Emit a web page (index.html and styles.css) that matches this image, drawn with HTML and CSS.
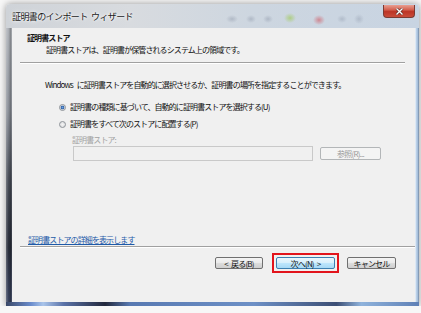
FILE: index.html
```html
<!DOCTYPE html>
<html>
<head>
    <meta charset="utf-8">
    <title>証明書のインポート ウィザード</title>
    <link rel="stylesheet" href="styles.css">
</head>
<body>
    <div class="window">
        <div class="titlebar">
            <span class="title">証明書のインポート ウィザード</span>
            <button class="close">
                <svg width="9" height="7" viewBox="0 0 9 7"><path d="M1.5 0.5 L7.5 6.5 M7.5 0.5 L1.5 6.5" stroke="#5a2a24" stroke-width="2.6"/><path d="M1.5 0.5 L7.5 6.5 M7.5 0.5 L1.5 6.5" stroke="#fff" stroke-width="1.4"/></svg>
            </button>
        </div>
        <div class="frame">
            <div class="edge-left"></div>
            <div class="client">
                <div class="header">
                    <h1>証明書ストア</h1>
                    <p>証明書ストアは、証明書が保管されるシステム上の領域です。</p>
                </div>
                <hr class="sep">
                <div class="body">
                    <p class="intro">Windows に証明書ストアを自動的に選択させるか、証明書の場所を指定することができます。</p>
                    <label class="radio"><span class="dot checked"></span>証明書の種類に基づいて、自動的に証明書ストアを選択する(U)</label>
                    <label class="radio"><span class="dot"></span>証明書をすべて次のストアに配置する(P)</label>
                    <div class="store">
                        <div class="store-label">証明書ストア:</div>
                        <div class="store-row">
                            <div class="field"></div>
                            <button class="btn disabled">参照(R)...</button>
                        </div>
                    </div>
                </div>
                <a class="more" href="#">証明書ストアの詳細を表示します</a>
                <hr class="sep">
                <div class="footer">
                    <button class="btn back">&lt; 戻る(B)</button>
                    <span class="highlight"><button class="btn default">次へ(N) &gt;</button></span>
                    <button class="btn cancel">キャンセル</button>
                </div>
            </div>
            <div class="edge-right"></div>
        </div>
        <div class="edge-bottom"></div>
    </div>
</body>
</html>
```

FILE: styles.css
```css
body {
    margin: 0;
    background: #f7f7f7;
    font-family: "Noto Sans CJK JP", "Noto Sans", sans-serif;
    color: #111;
}
.window {
    margin: 4px 0 0 6px;
    width: 413px;
    height: 302px;
    display: flex;
    flex-direction: column;
    box-shadow: 0 0 7px rgba(0, 0, 0, 0.4);
    border-radius: 4px 4px 0 0;
}
.titlebar {
    height: 24px;
    display: flex;
    align-items: flex-start;
    justify-content: space-between;
    border-radius: 4px 4px 0 0;
    background:
        radial-gradient(ellipse 6px 4px at 226px 15px, rgba(120,130,150,0.35), transparent),
        radial-gradient(ellipse 5px 4px at 245px 15px, rgba(120,130,150,0.35), transparent),
        radial-gradient(ellipse 5px 4px at 262px 15px, rgba(120,130,150,0.35), transparent),
        radial-gradient(ellipse 6px 5px at 284px 14px, rgba(150,200,60,0.55), transparent),
        radial-gradient(ellipse 6px 5px at 313px 16px, rgba(210,60,70,0.5), transparent),
        radial-gradient(ellipse 5px 4px at 336px 15px, rgba(120,130,150,0.3), transparent),
        radial-gradient(ellipse 5px 5px at 353px 15px, rgba(120,130,150,0.3), transparent),
        linear-gradient(to right, #cfd3d8 0, #d8dbdf 30%, #cdd6e0 60%, #c8d4e2 100%);
}
.title {
    padding: 7px 0 0 6px;
    font-size: 9px;
    letter-spacing: -0.6px;
    word-spacing: 2px;
    line-height: 12px;
    color: #1a1a1a;
    text-shadow: 0 0 4px #fff, 0 0 2px #fff;
}
.close {
    margin: 1px 4px 0 0;
    width: 32px;
    height: 13px;
    padding: 0;
    display: flex;
    align-items: center;
    justify-content: center;
    border: 1px solid #7a3a32;
    border-top: none;
    border-radius: 0 0 4px 4px;
    background: linear-gradient(to bottom, #e8a092 0, #d4604f 40%, #bc3526 55%, #c94c3a 100%);
}
.frame {
    flex: 1;
    display: flex;
}
.edge-left {
    width: 6px;
    background:
        linear-gradient(to right, rgba(255,255,255,0.25), rgba(0,0,0,0) 40%, rgba(0,0,0,0.25) 80%, rgba(255,255,255,0.1)),
        linear-gradient(to bottom, #aeb2b8 0, #8a8f98 30%, #4a4f5a 55%, #2a2f3c 80%, #3a4460 100%);
}
.edge-right {
    width: 4px;
    background:
        linear-gradient(to right, #eef4fa, #b6cde6 40%, #9db8d6 80%, #5a6a80),
        #b6cde6;
}
.edge-bottom {
    height: 4px;
    background: linear-gradient(to right, #3a4868 0, #6a8ccc 6%, #a9c4ea 9%, #5a72a8 14%, #22283c 24%, #5879b2 30%, #6d90c6 60%, #3c4e74 80%, #8fb3dc 86%, #5f80b6 100%);
}
.client {
    flex: 1;
    background: #f0f0f0;
    display: flex;
    flex-direction: column;
    font-size: 8px;
    letter-spacing: -0.9px;
    word-spacing: 3px;
    line-height: 12px;
}
.header {
    padding: 4px 0 6px 15px;
}
.header h1 {
    margin: 0;
    font-size: 8px;
    font-weight: bold;
    line-height: 12px;
}
.header p {
    margin: 0 0 0 19px;
}
.sep {
    margin: 0 10px 0 8px;
    border: none;
    border-top: 1px solid #a0a0a0;
    border-bottom: 1px solid #ffffff;
}
.body {
    padding-left: 33px;
    display: flex;
    flex-direction: column;
    align-items: flex-start;
}
.intro {
    margin: 15px 0 0 0;
}
.radio {
    margin-left: 14px;
    display: flex;
    align-items: center;
    gap: 4px;
}
.radio:first-of-type {
    margin-top: 10px;
}
.radio + .radio {
    margin-top: 5px;
}
.dot {
    width: 5px;
    height: 5px;
    border: 1px solid #8e9399;
    border-radius: 50%;
    background: radial-gradient(circle, #f4f4f4, #d6d8da);
}
.dot.checked {
    background: radial-gradient(circle, #6fa2de 0, #2d5fa6 45%, #d6dbe2 60%);
}
.store {
    margin: 4px 0 0 27px;
}
.store-label {
    color: #a2a2a2;
}
.store-row {
    display: flex;
    align-items: center;
    gap: 7px;
}
.field {
    margin-left: 1px;
    width: 238px;
    height: 13px;
    border: 1px solid #c9c9c9;
    background: #f0f0f0;
}
.btn {
    font-family: inherit;
    font-size: 8px;
    letter-spacing: -0.8px;
    word-spacing: 2px;
    line-height: 9px;
    height: 12px;
    padding: 0;
    color: #111;
    border: 1px solid #707070;
    border-radius: 2px;
    background: linear-gradient(to bottom, #f4f4f4 0, #ebebeb 45%, #dddddd 50%, #cfcfcf 100%);
}
.btn.disabled {
    width: 61px;
    height: 13px;
    color: #9a9a9a;
    border-color: #b3b6b8;
    background: #f4f4f4;
}
.more {
    margin: 73px 0 0 16px;
    align-self: flex-start;
    color: #1e5aa8;
    text-decoration: underline;
}
.more + .sep {
    margin-top: 0;
    margin-right: 0;
}
.footer {
    display: flex;
    align-items: center;
    justify-content: flex-end;
    padding: 5px 19px 0 0;
}
.back {
    width: 48px;
    margin-right: 9px;
}
.highlight {
    display: flex;
    padding: 2px;
    border: 2px solid #e2141c;
    margin-right: 8px;
}
.default {
    width: 59px;
    border-color: #3c7fb1;
    background: linear-gradient(to bottom, #eaf6fd 0, #d9f0fc 45%, #bee6fd 50%, #a7d9f5 100%);
}
.cancel {
    width: 49px;
}
```
